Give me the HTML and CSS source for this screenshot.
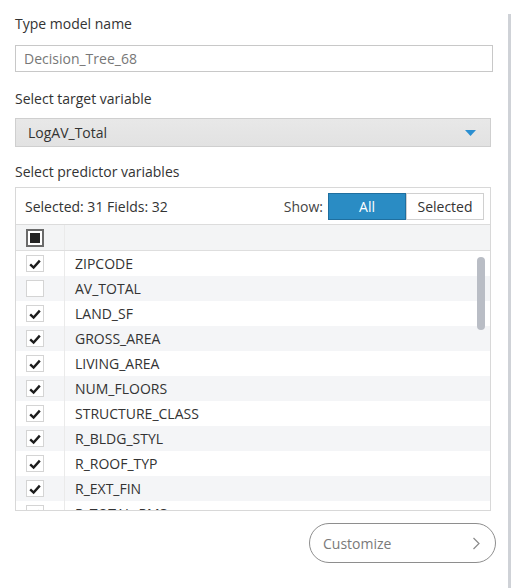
FILE: index.html
```html
<!DOCTYPE html>
<html>
<head>
<meta charset="utf-8">
<link rel="stylesheet" href="styles.css">
</head>
<body>
<div class="page">
  <div class="content">
    <div class="label l1">Type model name</div>
    <div class="textbox">Decision_Tree_68</div>
    <div class="label l2">Select target variable</div>
    <div class="select">
      <span>LogAV_Total</span>
      <svg class="arrow" width="11" height="6" viewBox="0 0 11 6"><path d="M0 0 H11 L5.5 6 Z" fill="#2b8fd1"/></svg>
    </div>
    <div class="label l3">Select predictor variables</div>
    <div class="panel">
      <div class="toolbar">
        <span class="count">Selected: 31 Fields: 32</span>
        <div class="show">
          <span class="show-label">Show:</span>
          <div class="seg">
            <div class="seg-btn on">All</div>
            <div class="seg-btn">Selected</div>
          </div>
        </div>
      </div>
      <div class="header">
        <div class="cbcell"><span class="cb partial"><span class="fill"></span></span></div>
        <div class="namecell"></div>
      </div>
      <div class="rows">
        <div class="row"><div class="cbcell"><span class="cb"><svg viewBox="0 0 16 16"><path d="M3.2 8.4 L6.6 11.6 L12.8 4.6" /></svg></span></div><div class="namecell">ZIPCODE</div></div>
        <div class="row alt"><div class="cbcell"><span class="cb"></span></div><div class="namecell">AV_TOTAL</div></div>
        <div class="row"><div class="cbcell"><span class="cb"><svg viewBox="0 0 16 16"><path d="M3.2 8.4 L6.6 11.6 L12.8 4.6" /></svg></span></div><div class="namecell">LAND_SF</div></div>
        <div class="row alt"><div class="cbcell"><span class="cb"><svg viewBox="0 0 16 16"><path d="M3.2 8.4 L6.6 11.6 L12.8 4.6" /></svg></span></div><div class="namecell">GROSS_AREA</div></div>
        <div class="row"><div class="cbcell"><span class="cb"><svg viewBox="0 0 16 16"><path d="M3.2 8.4 L6.6 11.6 L12.8 4.6" /></svg></span></div><div class="namecell">LIVING_AREA</div></div>
        <div class="row alt"><div class="cbcell"><span class="cb"><svg viewBox="0 0 16 16"><path d="M3.2 8.4 L6.6 11.6 L12.8 4.6" /></svg></span></div><div class="namecell">NUM_FLOORS</div></div>
        <div class="row"><div class="cbcell"><span class="cb"><svg viewBox="0 0 16 16"><path d="M3.2 8.4 L6.6 11.6 L12.8 4.6" /></svg></span></div><div class="namecell">STRUCTURE_CLASS</div></div>
        <div class="row alt"><div class="cbcell"><span class="cb"><svg viewBox="0 0 16 16"><path d="M3.2 8.4 L6.6 11.6 L12.8 4.6" /></svg></span></div><div class="namecell">R_BLDG_STYL</div></div>
        <div class="row"><div class="cbcell"><span class="cb"><svg viewBox="0 0 16 16"><path d="M3.2 8.4 L6.6 11.6 L12.8 4.6" /></svg></span></div><div class="namecell">R_ROOF_TYP</div></div>
        <div class="row alt"><div class="cbcell"><span class="cb"><svg viewBox="0 0 16 16"><path d="M3.2 8.4 L6.6 11.6 L12.8 4.6" /></svg></span></div><div class="namecell">R_EXT_FIN</div></div>
        <div class="row"><div class="cbcell"><span class="cb"><svg viewBox="0 0 16 16"><path d="M3.2 8.4 L6.6 11.6 L12.8 4.6" /></svg></span></div><div class="namecell">R_TOTAL_RMS</div></div>
        <div class="scrollbar"></div>
      </div>
    </div>
    <div class="footer">
      <div class="customize">
        <span>Customize</span>
        <svg width="9" height="13" viewBox="0 0 9 13"><path d="M1.5 1 L7 6.5 L1.5 12" fill="none" stroke="#8a8a8a" stroke-width="1.2"/></svg>
      </div>
    </div>
  </div>
</div>
</body>
</html>
```

FILE: styles.css
```css
* { box-sizing: border-box; }
html, body { margin: 0; padding: 0; background: #fff; }
body {
  font-family: "Open Sans", "Noto Sans", sans-serif;
  font-size: 14px;
  color: #333;
  width: 516px;
  height: 588px;
  overflow: hidden;
}
.page {
  width: 511px;
  height: 588px;
  border-right: 3px solid #cfd2d7;
}
.content {
  padding-left: 15px;
}
.label {
  line-height: 20px;
  height: 20px;
  color: #333;
}
.l1 { margin-top: 14px; margin-bottom: 11px; }
.l2 { margin-top: 17px; margin-bottom: 9px; }
.l3 { margin-top: 15px; margin-bottom: 5px; }

.textbox {
  width: 478px;
  height: 27px;
  border: 1px solid #c8c8c8;
  padding-left: 8px;
  line-height: 25px;
  color: #777;
}
.select {
  width: 476px;
  height: 29px;
  border: 1px solid #cfcfcf;
  background: linear-gradient(#e8e8e8, #e2e2e2);
  display: flex;
  align-items: center;
  justify-content: space-between;
  padding: 0 14px 0 12px;
  color: #333;
}
.select span { line-height: 27px; }
.arrow { display: block; }

.panel {
  width: 476px;
  border: 1px solid #d8d8d8;
}
.toolbar {
  height: 37px;
  border-bottom: 1px solid #dcdcdc;
  display: flex;
  align-items: center;
  justify-content: space-between;
  padding: 0 6px 0 9px;
}
.count { color: #333; }
.show { display: flex; align-items: center; gap: 5px; }
.show-label { color: #444; }
.seg { display: flex; }
.seg-btn {
  width: 78px;
  height: 27px;
  line-height: 25px;
  text-align: center;
  border: 1px solid #d0d0d0;
  color: #333;
}
.seg-btn.on {
  background: #2a8cc4;
  border-color: #1f6f9f;
  color: #fff;
}
.header {
  height: 26px;
  display: flex;
  background: #f3f4f5;
  border-bottom: 1px solid #dedede;
}
.cbcell {
  width: 49px;
  flex: none;
  border-right: 1px solid #eaeaea;
  display: flex;
  align-items: center;
  padding-left: 10px;
}
.namecell {
  flex: 1;
  padding-left: 10px;
  display: flex;
  align-items: center;
  color: #333;
}
.rows {
  position: relative;
  height: 259px;
  overflow: hidden;
}
.row {
  height: 25px;
  display: flex;
  background: #fff;
}
.row.alt { background: #f4f5f7; }
.cb {
  width: 18px;
  height: 17px;
  border: 1px solid #d4d4d4;
  background: #fff;
  display: flex;
  align-items: center;
  justify-content: center;
}
.cb svg {
  width: 16px;
  height: 16px;
  fill: none;
  stroke: #1c1c1c;
  stroke-width: 2.4;
}
.cb.partial {
  width: 18px;
  height: 18px;
  border: 2px solid #6a6a6a;
}
.cb.partial .fill {
  width: 10px;
  height: 10px;
  background: #222;
}
.scrollbar {
  position: absolute;
  right: 5px;
  top: 6px;
  width: 8px;
  height: 73px;
  border-radius: 4px;
  background: #b9bdc5;
}
.footer {
  display: flex;
  justify-content: flex-end;
  width: 481px;
  margin-top: 12px;
}
.customize {
  width: 187px;
  height: 40px;
  border: 1px solid #8e8e8e;
  border-radius: 20px;
  display: flex;
  align-items: center;
  justify-content: space-between;
  padding: 0 14px 0 13px;
  color: #7a7a7a;
}
.customize svg { display: block; }
```
